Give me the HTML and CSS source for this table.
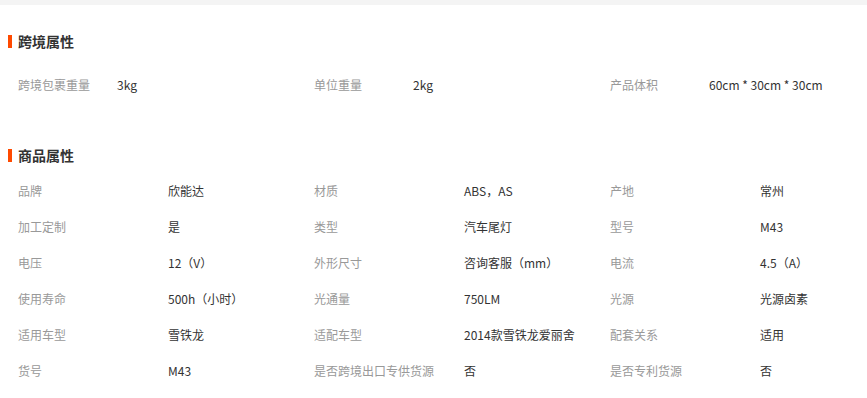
FILE: index.html
```html
<!DOCTYPE html>
<html lang="zh">
<head>
<meta charset="utf-8">
<link rel="stylesheet" href="styles.css">
</head>
<body>
<div class="topbar"></div>
<section class="section first">
  <h2 class="title">跨境属性</h2>
  <div class="grid short">
    <div class="cell"><span class="label">跨境包裹重量</span><span class="value">3kg</span></div>
    <div class="cell"><span class="label">单位重量</span><span class="value">2kg</span></div>
    <div class="cell"><span class="label">产品体积</span><span class="value">60cm * 30cm * 30cm</span></div>
  </div>
</section>
<section class="section second">
  <h2 class="title">商品属性</h2>
  <div class="grid long">
    <div class="cell"><span class="label">品牌</span><span class="value">欣能达</span></div>
    <div class="cell"><span class="label">材质</span><span class="value">ABS，AS</span></div>
    <div class="cell"><span class="label">产地</span><span class="value">常州</span></div>
    <div class="cell"><span class="label">加工定制</span><span class="value">是</span></div>
    <div class="cell"><span class="label">类型</span><span class="value">汽车尾灯</span></div>
    <div class="cell"><span class="label">型号</span><span class="value">M43</span></div>
    <div class="cell"><span class="label">电压</span><span class="value">12（V）</span></div>
    <div class="cell"><span class="label">外形尺寸</span><span class="value">咨询客服（mm）</span></div>
    <div class="cell"><span class="label">电流</span><span class="value">4.5（A）</span></div>
    <div class="cell"><span class="label">使用寿命</span><span class="value">500h（小时）</span></div>
    <div class="cell"><span class="label">光通量</span><span class="value">750LM</span></div>
    <div class="cell"><span class="label">光源</span><span class="value">光源卤素</span></div>
    <div class="cell"><span class="label">适用车型</span><span class="value">雪铁龙</span></div>
    <div class="cell"><span class="label">适配车型</span><span class="value">2014款雪铁龙爱丽舍</span></div>
    <div class="cell"><span class="label">配套关系</span><span class="value">适用</span></div>
    <div class="cell"><span class="label">货号</span><span class="value">M43</span></div>
    <div class="cell"><span class="label">是否跨境出口专供货源</span><span class="value">否</span></div>
    <div class="cell"><span class="label">是否专利货源</span><span class="value">否</span></div>
  </div>
</section>
</body>
</html>
```
FILE: styles.css
```css
html, body {
  margin: 0;
  padding: 0;
  background: #fff;
}
body {
  font-family: "Noto Sans CJK SC", "Microsoft YaHei", sans-serif;
  font-size: 12px;
  color: #333;
}
.topbar {
  height: 5px;
  background: #f4f4f4;
}
.section {
  padding-left: 8px;
}
.section.first {
  padding-top: 26px;
}
.section.second {
  padding-top: 43px;
}
.title {
  margin: 0;
  height: 20px;
  line-height: 20px;
  font-size: 14px;
  font-weight: bold;
  color: #333;
  display: flex;
  align-items: center;
  gap: 6px;
}
.title::before {
  content: "";
  width: 4px;
  height: 13px;
  background: #ff4a00;
}
.first .title {
  margin-bottom: 15px;
}
.second .title {
  margin-bottom: 7px;
}
.grid {
  display: grid;
  grid-template-columns: 296px 296px 1fr;
  padding-left: 10px;
}
.cell {
  display: flex;
  height: 36px;
  align-items: center;
  white-space: nowrap;
}
.label {
  color: #999;
  flex: none;
}
.short .label {
  width: 99px;
}
.long .label {
  width: 150px;
}
.value {
  color: #333;
}
```
